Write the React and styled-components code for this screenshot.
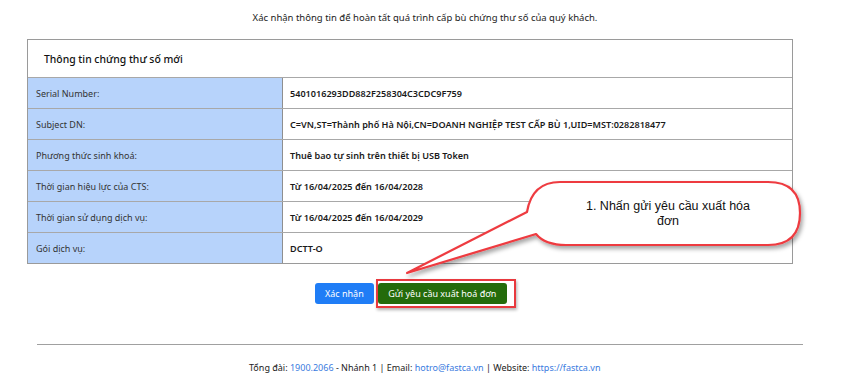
import React from 'react';
import styled, { createGlobalStyle } from 'styled-components';

const GlobalStyle = createGlobalStyle`
  html, body {
    margin: 0;
    padding: 0;
    background: #ffffff;
  }
  body {
    font-family: "Noto Sans", "Open Sans", sans-serif;
    color: #222;
  }
`;

const Page = styled.div`
  position: relative;
  width: 866px;
  height: 384px;
  overflow: hidden;
  padding-top: 10px;
  box-sizing: border-box;
`;

const Intro = styled.p`
  margin: 0;
  text-align: center;
  width: 850px;
  font-size: 9.5px;
  line-height: 15px;
  color: #222;
`;

const Card = styled.div`
  margin: 14px 0 0 27px;
  width: 766px;
  border: 1px solid #9a9a9a;
  box-sizing: border-box;
`;

const CardTitle = styled.div`
  height: 37px;
  display: flex;
  align-items: center;
  padding-left: 16px;
  font-size: 10.4px;
  font-weight: 500;
  color: #111;
  border-bottom: 1px solid #a8a8a8;
`;

const Row = styled.div`
  display: grid;
  grid-template-columns: 255px 1fr;
  height: 30px;
  border-bottom: ${p => (p.$last ? 'none' : '1px solid #a8a8a8')};
`;

const Label = styled.div`
  background: #b7d3fb;
  border-right: 1px solid #8f8f8f;
  display: flex;
  align-items: center;
  padding-left: 8px;
  font-size: 9px;
  color: #333;
`;

const Value = styled.div`
  display: flex;
  align-items: center;
  padding-left: 7px;
  font-size: 9.1px;
  font-weight: 600;
  color: #1a1a1a;
  white-space: nowrap;
`;

const Actions = styled.div`
  display: flex;
  align-items: center;
  gap: 4px;
  margin: 15px 0 0 315px;
`;

const Button = styled.button`
  height: 21px;
  padding: 0 ${p => p.$pad}px;
  border: none;
  border-radius: 3px;
  font-family: "Noto Sans", "Open Sans", sans-serif;
  font-size: 9px;
  color: #fff;
  background: ${p => p.$bg};
  cursor: pointer;
`;

const Highlight = styled.span`
  display: inline-flex;
  padding: 2px 7px 2px 0;
  margin-left: -2px;
  border: 2px solid #e8393e;
  box-shadow: 1px 2px 3px rgba(0, 0, 0, 0.3);
`;

const Divider = styled.hr`
  margin: 36px 0 0 37px;
  width: 766px;
  border: none;
  border-top: 1px solid #a0a0a0;
`;

const Footer = styled.div`
  margin-top: 16px;
  padding-left: 249px;
  font-size: 9px;
  color: #222;
  white-space: nowrap;
`;

const Link = styled.span`
  color: #3a7be0;
`;

const Overlay = styled.svg`
  position: absolute;
  left: 0;
  top: 0;
  pointer-events: none;
`;

const rows = [
  ['Serial Number:', '5401016293DD882F258304C3CDC9F759'],
  ['Subject DN:', 'C=VN,ST=Thành phố Hà Nội,CN=DOANH NGHIỆP TEST CẤP BÙ 1,UID=MST:0282818477'],
  ['Phương thức sinh khoá:', 'Thuê bao tự sinh trên thiết bị USB Token'],
  ['Thời gian hiệu lực của CTS:', 'Từ 16/04/2025 đến 16/04/2028'],
  ['Thời gian sử dụng dịch vụ:', 'Từ 16/04/2025 đến 16/04/2029'],
  ['Gói dịch vụ:', 'DCTT-O'],
];

const Callout = () => (
  <Overlay width="866" height="384" viewBox="0 0 866 384">
    <defs>
      <filter id="sh" x="-10%" y="-10%" width="130%" height="140%">
        <feDropShadow dx="2" dy="3" stdDeviation="2" floodColor="#000" floodOpacity="0.35" />
      </filter>
    </defs>
    <path
      d="M560 182 H768 Q800 182 800 213 Q800 245 768 245 H566 Q545 245 536 234 L407 273 L527 212 Q532 182 560 182 Z"
      fill="#ffffff"
      stroke="#ee3b40"
      strokeWidth="2.2"
      strokeLinejoin="round"
      filter="url(#sh)"
    />
    <text x="668" y="210" textAnchor="middle" fontFamily="Liberation Sans, Arial, sans-serif" fontSize="12.5" fill="#111">
      1. Nhấn gửi yêu cầu xuất hóa
    </text>
    <text x="668" y="225" textAnchor="middle" fontFamily="Liberation Sans, Arial, sans-serif" fontSize="12.5" fill="#111">
      đơn
    </text>
  </Overlay>
);

export default function App() {
  return (
    <>
      <GlobalStyle />
      <Page>
        <Intro>Xác nhận thông tin để hoàn tất quá trình cấp bù chứng thư số của quý khách.</Intro>
        <Card>
          <CardTitle>Thông tin chứng thư số mới</CardTitle>
          {rows.map(([k, v], i) => (
            <Row key={k} $last={i === rows.length - 1}>
              <Label>{k}</Label>
              <Value>{v}</Value>
            </Row>
          ))}
        </Card>
        <Actions>
          <Button $bg="#1f7df6" $pad={10}>Xác nhận</Button>
          <Highlight>
            <Button $bg="#246b0b" $pad={10.5}>Gửi yêu cầu xuất hoá đơn</Button>
          </Highlight>
        </Actions>
        <Divider />
        <Footer>
          Tổng đài: <Link>1900.2066</Link> - Nhánh 1 | Email: <Link>hotro@fastca.vn</Link> | Website:{' '}
          <Link>https://fastca.vn</Link>
        </Footer>
        <Callout />
      </Page>
    </>
  );
}
